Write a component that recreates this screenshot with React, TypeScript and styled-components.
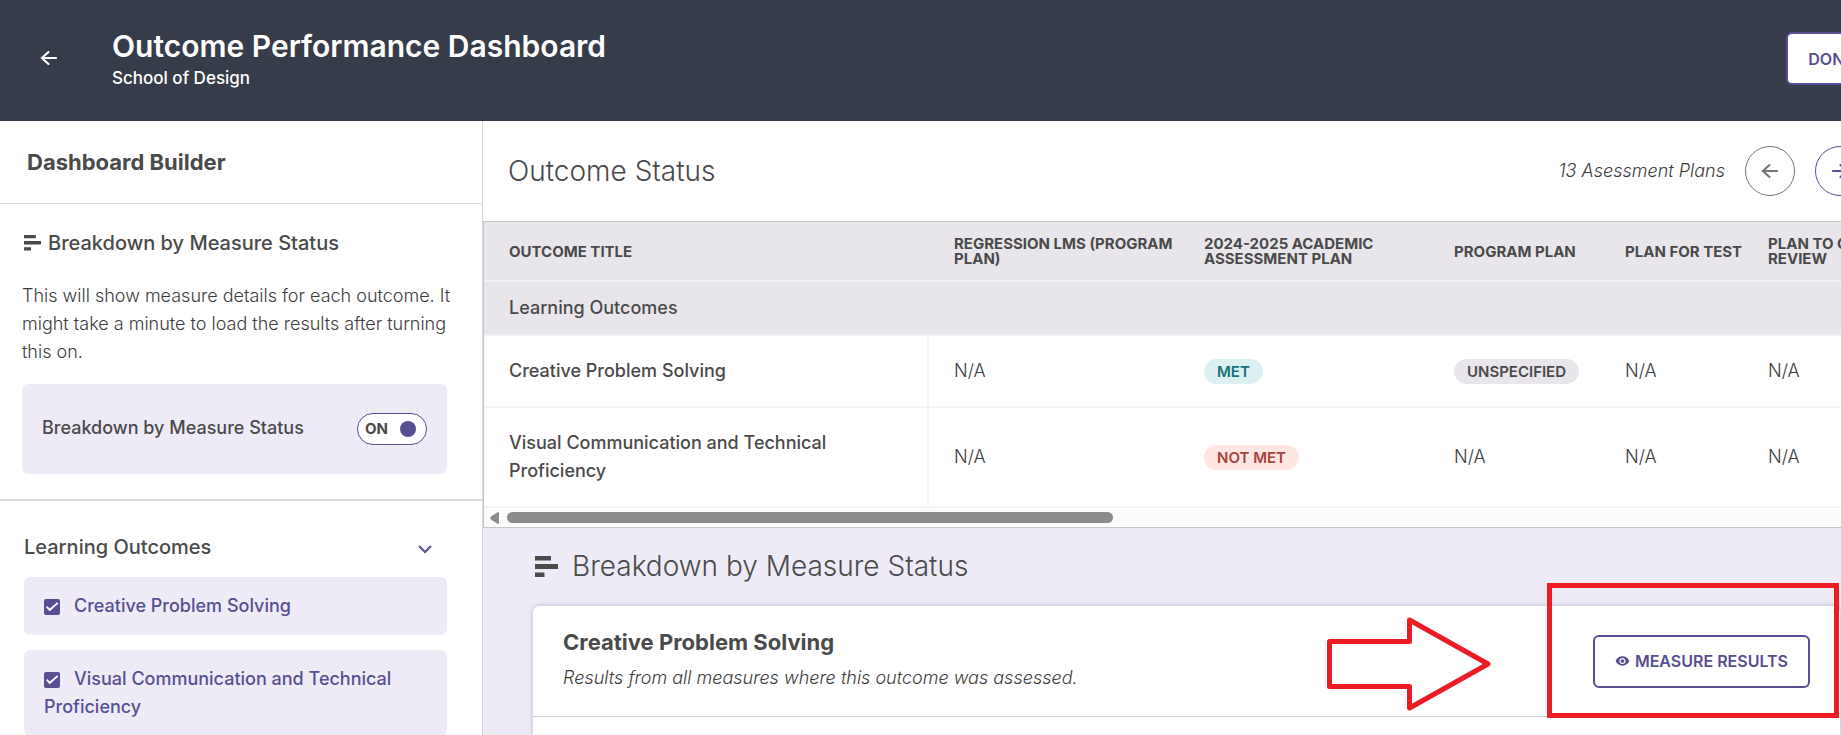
import React from "react";
import styled, { createGlobalStyle } from "styled-components";
import { MdVisibility } from "react-icons/md";

const ink = "#4a4a4a";
const bodyInk = "#3d3d3d";
const purple = "#564f92";
const lavender = "#eeebf7";
const red = "#ed1c24";

const GlobalStyle = createGlobalStyle`
  *, *::before, *::after { box-sizing: border-box; }
  html, body { margin: 0; overflow: hidden; }
  body {
    background: #fff;
    color: ${ink};
    font-family: Inter, "Liberation Sans", sans-serif;
    font-size: 18px;
    line-height: 28px;
  }
  h1, h2, h3, h4, p { margin: 0; }
  button { font-family: inherit; cursor: pointer; }
`;

/* The dashboard is a little wider than the window and runs off its right side. */
const Page = styled.div`
  width: calc(100% + 49px);
  height: 100vh;
  display: flex;
  flex-direction: column;
`;

const TopBar = styled.header`
  display: flex;
  align-items: center;
  flex: none;
  height: 121px;
  padding: 0 14px 4px 36px;
  background: #363c49;
  color: #fff;
`;

const BackButton = styled.button`
  display: flex;
  padding: 0 0 2px;
  margin-right: 50px;
  border: 0;
  background: none;
  color: #fff;
`;

const Titles = styled.div`
  flex: 1;
  padding-top: 3px;
`;

const PageTitle = styled.h1`
  font-size: 30px;
  line-height: 36px;
  font-weight: 600;
`;

const PageSubtitle = styled.p`
  font-size: 17px;
  line-height: 28px;
  font-weight: 500;
`;

const OutlineButton = styled.button`
  display: flex;
  align-items: center;
  justify-content: center;
  gap: 5px;
  height: 53px;
  padding: 0 20px;
  border: 2px solid ${purple};
  border-radius: 6px;
  background: #fff;
  color: ${purple};
  font-size: 16px;
  font-weight: 600;
  white-space: nowrap;
`;

const Body = styled.div`
  flex: 1;
  min-height: 0;
  display: grid;
  grid-template-columns: 483px minmax(0, 1fr);
  grid-template-rows: minmax(0, 1fr);
`;

const Sidebar = styled.aside`
  overflow: hidden;
  border-right: 1px solid #d8d8d8;
`;

const SidebarHeader = styled.div`
  padding: 27px 27px 26px;
  border-bottom: 1px solid #dcdcdc;
`;

const CardTitle = styled.h3`
  font-size: 22px;
  line-height: 29px;
  font-weight: 700;
`;

const BreakdownSection = styled.section`
  padding: 25px 35px 25px 22px;
  border-bottom: 2px solid #dcdcdc;
`;

const SectionTitle = styled.h3`
  display: flex;
  align-items: center;
  gap: 7px;
  padding-left: 2px;
  font-size: 20px;
  line-height: 28px;
  font-weight: 500;
`;

const Description = styled.p`
  margin: 25px -8px 18px 0;
  color: ${bodyInk};
  font-weight: 300;
`;

const SwitchPanel = styled.label`
  display: flex;
  align-items: center;
  justify-content: space-between;
  height: 90px;
  padding: 0 20px 3px;
  border-radius: 6px;
  background: ${lavender};
  font-weight: 500;
  cursor: pointer;
`;

const Switch = styled.span`
  display: flex;
  align-items: center;
  width: 70px;
  height: 32px;
  margin-top: 3px;
  padding: 0 10px 0 7px;
  border: 1px solid ${purple};
  border-radius: 16px;
  background: #fff;
  font-size: 15px;
  font-weight: 700;
`;

const SwitchInput = styled.input`
  appearance: none;
  width: 16px;
  height: 16px;
  margin: 0 0 0 auto;
  border-radius: 50%;
  background: ${purple};
`;

const OutcomesSection = styled.section`
  display: flex;
  flex-direction: column;
  gap: 15px;
  padding: 32px 35px 0 24px;
`;

const OutcomesHeader = styled.div`
  display: flex;
  align-items: center;
  justify-content: space-between;
  padding: 0 14px 1px 0;

  ${SectionTitle} { padding: 0; }
`;

const ChevronButton = styled.button`
  display: flex;
  padding: 3px 0 0;
  border: 0;
  background: none;
  color: ${purple};
`;

const OutcomeOption = styled.label`
  display: block;
  padding: 15px 20px;
  border-radius: 6px;
  background: ${lavender};
  color: ${purple};
  font-weight: 500;
  cursor: pointer;
`;

const CheckBox = styled.input`
  appearance: none;
  width: 16px;
  height: 16px;
  margin: 0 14px 0 0;
  border-radius: 2px;
  background: ${purple};
  vertical-align: -3px;

  &:checked::after {
    content: "";
    display: block;
    width: 16px;
    height: 16px;
    background: #fff;
    clip-path: polygon(12% 51%, 20% 43%, 36% 60%, 82% 20%, 90% 28%, 36% 76%);
  }
`;

const Main = styled.main`
  display: flex;
  flex-direction: column;
  min-width: 0;
  min-height: 0;
`;

const StatusHeader = styled.div`
  display: flex;
  align-items: center;
  gap: 20px;
  flex: none;
  height: 100px;
  padding: 0 25px;
`;

const LargeTitle = styled.h2`
  font-size: 28px;
  line-height: 36px;
  font-weight: 350;
`;

const PlanCount = styled.em`
  margin-left: auto;
  color: ${bodyInk};
  font-weight: 300;
`;

const RoundButton = styled.button<{ $color: string }>`
  display: flex;
  align-items: center;
  justify-content: center;
  width: 50px;
  height: 50px;
  padding: 0;
  border: 1px solid ${(p) => p.$color};
  border-radius: 50%;
  background: #fff;
  color: ${(p) => p.$color};
`;

const TableFrame = styled.div`
  flex: none;
  overflow: hidden;
  border: 1px solid #c8c8cb;
  border-right: 0;
`;

const Table = styled.table`
  width: 100%;
  table-layout: fixed;
  border-collapse: separate;
  border-spacing: 0;
`;

const HeadCell = styled.th<{ $width?: number }>`
  width: ${(p) => (p.$width ? `${p.$width}px` : "auto")};
  height: 60px;
  padding: 0 0 0 25px;
  border-bottom: 2px solid #f3f2f5;
  background: #e8e6eb;
  font-size: 15px;
  line-height: 15px;
  font-weight: 700;
  text-align: left;
  text-transform: uppercase;
`;

const GroupCell = styled.th`
  height: 54px;
  padding: 0 25px;
  border-bottom: 2px solid #f3f2f5;
  background: #e8e6eb;
  font-weight: 500;
  text-align: left;
`;

const OutcomeCell = styled.th`
  padding: 21px 25px;
  border-right: 2px solid #f3f3f5;
  border-bottom: 2px solid #f3f3f5;
  font-weight: 500;
  text-align: left;
`;

const Cell = styled.td`
  padding: 21px 0 21px 25px;
  border-bottom: 2px solid #f3f3f5;
  color: ${bodyInk};
  font-weight: 300;
`;

const tones = {
  met: ["#dcf0f1", "#17717a"],
  notMet: ["#ffe6e2", "#a8433c"],
  neutral: ["#e8e6eb", ink],
};

const Badge = styled.span<{ $tone: keyof typeof tones }>`
  display: inline-block;
  padding: 0 13px;
  border-radius: 13px;
  background: ${(p) => tones[p.$tone][0]};
  color: ${(p) => tones[p.$tone][1]};
  font-size: 15px;
  line-height: 25px;
  font-weight: 600;
`;

const ScrollTrack = styled.div`
  display: flex;
  align-items: center;
  gap: 8px;
  height: 19px;
  padding: 0 6px;
  background: #fcfcfc;
  color: #8b8b8b;
`;

const ScrollThumb = styled.div`
  flex: 11 1 0;
  height: 11px;
  border-radius: 6px;
  background: currentColor;
`;

const ScrollRest = styled.div`
  flex: 14 1 0;
  margin-left: -8px;
`;

const BreakdownArea = styled.section`
  flex: 1;
  min-height: 0;
  display: flex;
  flex-direction: column;
  padding: 20px 50px 0;
  background: ${lavender};
  overflow: hidden;
`;

const BreakdownTitle = styled.div`
  display: flex;
  align-items: center;
  gap: 14px;
  padding-left: 2px;
`;

const ResultCard = styled.article`
  flex: 1;
  margin-top: 22px;
  border-radius: 6px 6px 0 0;
  background: #fff;
  box-shadow: 0 0 5px rgba(60, 55, 90, 0.3);
`;

const ResultHeader = styled.div`
  display: flex;
  align-items: center;
  justify-content: space-between;
  height: 111px;
  padding: 0 30px;
  border-bottom: 1px solid #cfcfd4;
`;

const ResultText = styled.div`
  padding-bottom: 2px;
`;

const ResultNote = styled.p`
  margin-top: 7px;
  color: ${bodyInk};
  font-style: italic;
  font-weight: 300;
`;

const Callout = styled.div`
  position: relative;
`;

const MeasureButton = styled(OutlineButton)`
  width: 217px;
`;

/* Hand-drawn marks that sit over the card and point at the button. */
const CalloutFrame = styled.div`
  position: absolute;
  inset: -52px -29px -30px -46px;
  border: 5px solid ${red};
  pointer-events: none;
`;

const CalloutArrow = styled.svg`
  position: absolute;
  top: -19px;
  right: 318px;
  pointer-events: none;
`;

function Arrow({ right = false }: { right?: boolean }) {
  return (
    <svg width="26" height="26" viewBox="0 0 24 24" fill="none" stroke="currentColor" strokeWidth="2" strokeLinecap="round" aria-hidden="true">
      <path d={right ? "M5.500 12H18.500M12.500 6.500L18.500 12L12.500 17.500" : "M18.500 12H5.500M11.500 6.500L5.500 12L11.500 17.500"} />
    </svg>
  );
}

function BarsIcon({ width }: { width: number }) {
  return (
    <svg width={width} viewBox="0 0 23 21" fill="currentColor" aria-hidden="true">
      <path d="M0 0h16v4.500H0zM0 8h23v5H0zM0 16.500h9.500v4.500H0z" />
    </svg>
  );
}

const columns = [
  { title: "Outcome Title", width: 445 },
  { title: "Regression LMS (Program Plan)", width: 250 },
  { title: "2024-2025 Academic Assessment Plan", width: 250 },
  { title: "Program Plan", width: 171 },
  { title: "Plan for Test", width: 143 },
  { title: "Plan to C Review" },
];

type Status = "N/A" | "Met" | "Not Met" | "Unspecified";

const rows: { outcome: string; statuses: Status[] }[] = [
  { outcome: "Creative Problem Solving", statuses: ["N/A", "Met", "Unspecified", "N/A", "N/A"] },
  {
    outcome: "Visual Communication and Technical Proficiency",
    statuses: ["N/A", "Not Met", "N/A", "N/A", "N/A"],
  },
];

function StatusValue({ status }: { status: Status }) {
  if (status === "N/A") return <>N/A</>;
  const tone = status === "Met" ? "met" : status === "Not Met" ? "notMet" : "neutral";
  return <Badge $tone={tone}>{status.toUpperCase()}</Badge>;
}

export default function App() {
  return (
    <Page>
      <GlobalStyle />
      <TopBar>
        <BackButton aria-label="Back">
          <Arrow />
        </BackButton>
        <Titles>
          <PageTitle>Outcome Performance Dashboard</PageTitle>
          <PageSubtitle>School of Design</PageSubtitle>
        </Titles>
        <OutlineButton>DONE</OutlineButton>
      </TopBar>

      <Body>
        <Sidebar>
          <SidebarHeader>
            <CardTitle as="h2">Dashboard Builder</CardTitle>
          </SidebarHeader>
          <BreakdownSection>
            <SectionTitle>
              <BarsIcon width={17} />
              Breakdown by Measure Status
            </SectionTitle>
            <Description>
              This will show measure details for each outcome. It might take a minute to load the results after turning
              this on.
            </Description>
            <SwitchPanel>
              Breakdown by Measure Status
              <Switch>
                ON
                <SwitchInput type="checkbox" role="switch" defaultChecked />
              </Switch>
            </SwitchPanel>
          </BreakdownSection>
          <OutcomesSection>
            <OutcomesHeader>
              <SectionTitle>Learning Outcomes</SectionTitle>
              <ChevronButton aria-label="Collapse Learning Outcomes">
                <svg width="16" height="16" viewBox="0 0 16 16" fill="none" stroke="currentColor" strokeWidth="2">
                  <path d="M2 5l6 6 6-6" />
                </svg>
              </ChevronButton>
            </OutcomesHeader>
            {rows.map((row) => (
              <OutcomeOption key={row.outcome}>
                <CheckBox type="checkbox" defaultChecked />
                {row.outcome}
              </OutcomeOption>
            ))}
          </OutcomesSection>
        </Sidebar>

        <Main>
          <StatusHeader>
            <LargeTitle>Outcome Status</LargeTitle>
            <PlanCount>13 Asessment Plans</PlanCount>
            <RoundButton $color="#757575" aria-label="Previous plans">
              <Arrow />
            </RoundButton>
            <RoundButton $color={purple} aria-label="Next plans">
              <Arrow right />
            </RoundButton>
          </StatusHeader>

          <TableFrame>
            <Table>
              <thead>
                <tr>
                  {columns.map((column) => (
                    <HeadCell key={column.title} $width={column.width} scope="col">
                      {column.title}
                    </HeadCell>
                  ))}
                </tr>
              </thead>
              <tbody>
                <tr>
                  <GroupCell colSpan={columns.length} scope="rowgroup">
                    Learning Outcomes
                  </GroupCell>
                </tr>
                {rows.map((row) => (
                  <tr key={row.outcome}>
                    <OutcomeCell scope="row">{row.outcome}</OutcomeCell>
                    {row.statuses.map((status, index) => (
                      <Cell key={index}>
                        <StatusValue status={status} />
                      </Cell>
                    ))}
                  </tr>
                ))}
              </tbody>
            </Table>
            <ScrollTrack>
              <svg width="9" height="12" viewBox="0 0 9 12" fill="currentColor" aria-hidden="true">
                <path d="M8 0q1 0 1 1v10q0 1-1 1L1 7.500Q-.5 6 1 4.500z" />
              </svg>
              <ScrollThumb />
              <ScrollRest />
            </ScrollTrack>
          </TableFrame>

          <BreakdownArea>
            <BreakdownTitle>
              <BarsIcon width={23} />
              <LargeTitle>Breakdown by Measure Status</LargeTitle>
            </BreakdownTitle>
            <ResultCard>
              <ResultHeader>
                <ResultText>
                  <CardTitle>Creative Problem Solving</CardTitle>
                  <ResultNote>Results from all measures where this outcome was assessed.</ResultNote>
                </ResultText>
                <Callout>
                  <MeasureButton>
                    <MdVisibility size={18} />
                    MEASURE RESULTS
                  </MeasureButton>
                  <CalloutFrame />
                  <CalloutArrow
                    width="166"
                    height="98"
                    viewBox="0 0 166 98"
                    fill="none"
                    stroke={red}
                    strokeWidth="5"
                    strokeLinejoin="round"
                    aria-hidden="true"
                  >
                    <path d="M3.500 25.500H83.500V4L162 48L83.500 92V70.500H3.500z" />
                  </CalloutArrow>
                </Callout>
              </ResultHeader>
            </ResultCard>
          </BreakdownArea>
        </Main>
      </Body>
    </Page>
  );
}
